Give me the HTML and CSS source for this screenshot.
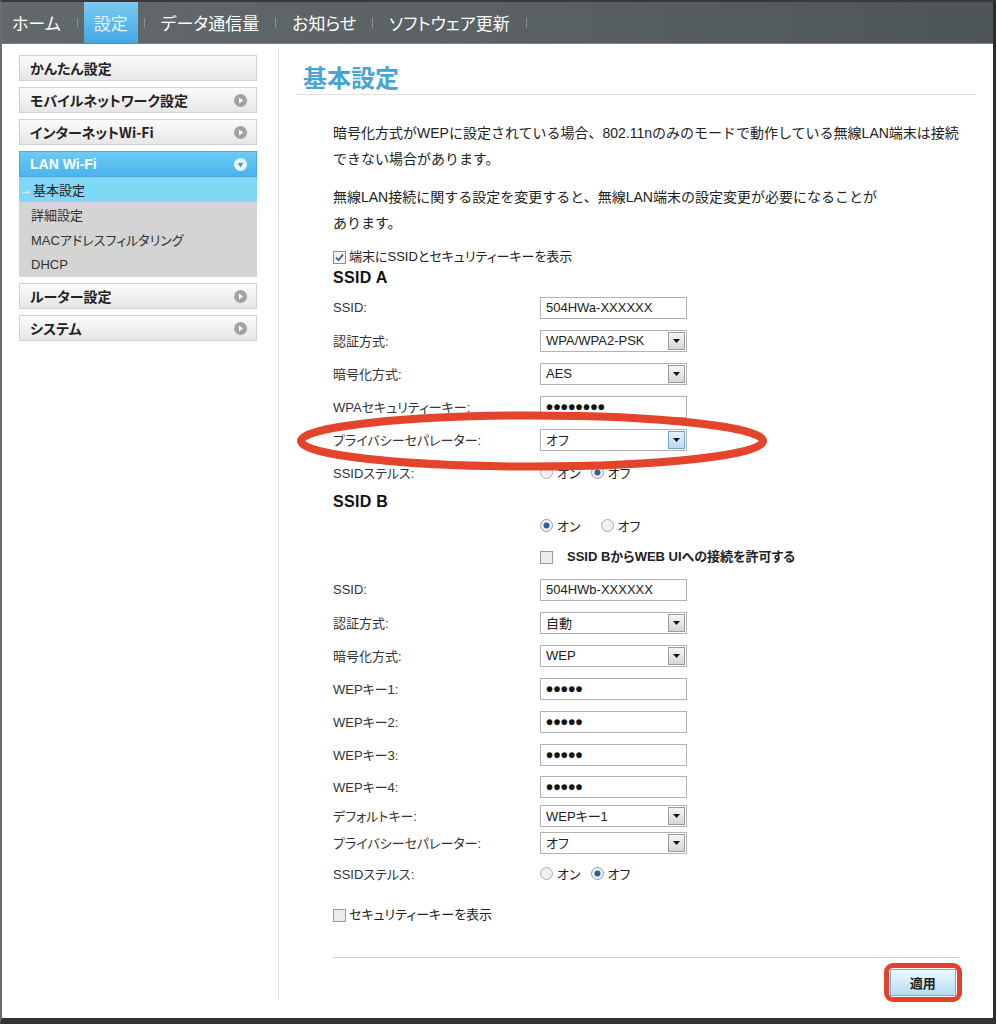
FILE: index.html
```html
<!DOCTYPE html>
<html lang="ja">
<head>
<meta charset="utf-8">
<title>基本設定</title>
<link rel="stylesheet" href="styles.css">
</head>
<body>
<div class="frame">
  <nav class="topnav">
    <a class="nav-item">ホーム</a><span class="nav-sep"></span>
    <a class="nav-item active">設定</a><span class="nav-sep"></span>
    <a class="nav-item">データ通信量</a><span class="nav-sep"></span>
    <a class="nav-item">お知らせ</a><span class="nav-sep"></span>
    <a class="nav-item">ソフトウェア更新</a><span class="nav-sep"></span>
  </nav>
  <div class="content">
    <aside class="sidebar">
      <div class="menu-btn"><span>かんたん設定</span></div>
      <div class="menu-btn"><span>モバイルネットワーク設定</span><svg class="menu-icon" viewBox="0 0 13 13"><circle cx="6.5" cy="6.5" r="6.5" fill="#a2a2a2"/><path d="M5 3.6 L9.2 6.5 L5 9.4Z" fill="#fff"/></svg></div>
      <div class="menu-btn"><span>インターネットWi-Fi</span><svg class="menu-icon" viewBox="0 0 13 13"><circle cx="6.5" cy="6.5" r="6.5" fill="#a2a2a2"/><path d="M5 3.6 L9.2 6.5 L5 9.4Z" fill="#fff"/></svg></div>
      <div class="menu-group">
        <div class="menu-btn open"><span>LAN Wi-Fi</span><svg class="menu-icon" viewBox="0 0 13 13"><circle cx="6.5" cy="6.5" r="6.5" fill="#e9f7fe"/><path d="M3.6 5 L9.4 5 L6.5 9.2Z" fill="#3f96d8"/></svg></div>
        <div class="submenu">
          <div class="sub-item current"><span class="sub-arrow">→</span>基本設定</div>
          <div class="sub-item">詳細設定</div>
          <div class="sub-item">MACアドレスフィルタリング</div>
          <div class="sub-item">DHCP</div>
        </div>
      </div>
      <div class="menu-btn"><span>ルーター設定</span><svg class="menu-icon" viewBox="0 0 13 13"><circle cx="6.5" cy="6.5" r="6.5" fill="#a2a2a2"/><path d="M5 3.6 L9.2 6.5 L5 9.4Z" fill="#fff"/></svg></div>
      <div class="menu-btn"><span>システム</span><svg class="menu-icon" viewBox="0 0 13 13"><circle cx="6.5" cy="6.5" r="6.5" fill="#a2a2a2"/><path d="M5 3.6 L9.2 6.5 L5 9.4Z" fill="#fff"/></svg></div>
    </aside>
    <main class="main">
      <h1 class="page-title">基本設定</h1>
      <div class="panel">
        <p class="note first">暗号化方式がWEPに設定されている場合、802.11nのみのモードで動作している無線LAN端末は接続<br>できない場合があります。</p>
        <p class="note">無線LAN接続に関する設定を変更すると、無線LAN端末の設定変更が必要になることが<br>あります。</p>

        <div class="check-line top-check">
          <svg class="box" viewBox="0 0 13 13"><rect x="0.5" y="0.5" width="12" height="12" fill="#f4f4f4" stroke="#8e8e8e"/><path d="M3 6.5 L5.5 9.2 L10 3.5" fill="none" stroke="#3a5f8c" stroke-width="1.8"/></svg>
          <span>端末にSSIDとセキュリティーキーを表示</span>
        </div>

        <h2 class="ssid-heading">SSID A</h2>
        <div class="row"><span class="label">SSID:</span><div class="field">504HWa-XXXXXX</div></div>
        <div class="row"><span class="label">認証方式:</span><div class="field select"><span>WPA/WPA2-PSK</span><span class="drop"><svg viewBox="0 0 7 4"><path d="M0 0H7L3.5 4Z" fill="#111"/></svg></span></div></div>
        <div class="row"><span class="label">暗号化方式:</span><div class="field select"><span>AES</span><span class="drop"><svg viewBox="0 0 7 4"><path d="M0 0H7L3.5 4Z" fill="#111"/></svg></span></div></div>
        <div class="row"><span class="label">WPAセキュリティーキー:</span><div class="field"><span class="dots">••••••••</span></div></div>
        <div class="row"><span class="label">プライバシーセパレーター:</span><div class="field select"><span>オフ</span><span class="drop focus"><svg viewBox="0 0 7 4"><path d="M0 0H7L3.5 4Z" fill="#111"/></svg></span></div></div>
        <div class="row"><span class="label">SSIDステルス:</span>
          <div class="radios">
            <span class="radio"><svg viewBox="0 0 13 13"><circle cx="6.5" cy="6.5" r="6" fill="#f1f1f1" stroke="#acacac"/></svg>オン</span>
            <span class="radio"><svg viewBox="0 0 13 13"><circle cx="6.5" cy="6.5" r="6" fill="#f1f1f1" stroke="#8a9bb0"/><circle cx="6.5" cy="6.5" r="3" fill="#2e5f99"/></svg>オフ</span>
          </div>
        </div>

        <h2 class="ssid-heading b">SSID B</h2>
        <div class="row radio-row"><span class="label"></span>
          <div class="radios">
            <span class="radio"><svg viewBox="0 0 13 13"><circle cx="6.5" cy="6.5" r="6" fill="#f1f1f1" stroke="#8a9bb0"/><circle cx="6.5" cy="6.5" r="3" fill="#2e5f99"/></svg>オン</span>
            <span class="radio wide"><svg viewBox="0 0 13 13"><circle cx="6.5" cy="6.5" r="6" fill="#f1f1f1" stroke="#acacac"/></svg>オフ</span>
          </div>
        </div>
        <div class="row check-row"><span class="label"></span>
          <div class="check-line">
            <svg class="box" viewBox="0 0 13 13"><rect x="0.5" y="0.5" width="12" height="12" fill="#ececec" stroke="#9a9a9a"/></svg>
            <span class="strong">SSID BからWEB UIへの接続を許可する</span>
          </div>
        </div>
        <div class="row"><span class="label">SSID:</span><div class="field">504HWb-XXXXXX</div></div>
        <div class="row"><span class="label">認証方式:</span><div class="field select"><span>自動</span><span class="drop"><svg viewBox="0 0 7 4"><path d="M0 0H7L3.5 4Z" fill="#111"/></svg></span></div></div>
        <div class="row"><span class="label">暗号化方式:</span><div class="field select"><span>WEP</span><span class="drop"><svg viewBox="0 0 7 4"><path d="M0 0H7L3.5 4Z" fill="#111"/></svg></span></div></div>
        <div class="row"><span class="label">WEPキー1:</span><div class="field"><span class="dots">•••••</span></div></div>
        <div class="row"><span class="label">WEPキー2:</span><div class="field"><span class="dots">•••••</span></div></div>
        <div class="row"><span class="label">WEPキー3:</span><div class="field"><span class="dots">•••••</span></div></div>
        <div class="row row-31"><span class="label">WEPキー4:</span><div class="field"><span class="dots">•••••</span></div></div>
        <div class="row row-27"><span class="label">デフォルトキー:</span><div class="field select"><span>WEPキー1</span><span class="drop"><svg viewBox="0 0 7 4"><path d="M0 0H7L3.5 4Z" fill="#111"/></svg></span></div></div>
        <div class="row row-27"><span class="label">プライバシーセパレーター:</span><div class="field select"><span>オフ</span><span class="drop"><svg viewBox="0 0 7 4"><path d="M0 0H7L3.5 4Z" fill="#111"/></svg></span></div></div>
        <div class="row row-35"><span class="label">SSIDステルス:</span>
          <div class="radios">
            <span class="radio"><svg viewBox="0 0 13 13"><circle cx="6.5" cy="6.5" r="6" fill="#f1f1f1" stroke="#acacac"/></svg>オン</span>
            <span class="radio"><svg viewBox="0 0 13 13"><circle cx="6.5" cy="6.5" r="6" fill="#f1f1f1" stroke="#8a9bb0"/><circle cx="6.5" cy="6.5" r="3" fill="#2e5f99"/></svg>オフ</span>
          </div>
        </div>

        <div class="check-line bottom-check">
          <svg class="box" viewBox="0 0 13 13"><rect x="0.5" y="0.5" width="12" height="12" fill="#ececec" stroke="#9a9a9a"/></svg>
          <span>セキュリティーキーを表示</span>
        </div>

        <div class="actions">
          <span class="callout"><button class="apply-btn" type="button">適用</button></span>
        </div>
      </div>
    </main>
  </div>
  <svg class="highlight-oval" viewBox="0 0 480 68"><ellipse cx="240" cy="34" rx="231" ry="25.5" fill="none" stroke="#e4432c" stroke-width="8"/></svg>
</div>
</body>
</html>
```

FILE: styles.css
```css
* { box-sizing: border-box; }

body {
  margin: 0;
  background: #fff;
  color: #222;
  font-family: "Liberation Sans", "Noto Sans CJK JP", sans-serif;
}

.frame {
  position: relative;
  width: 996px;
  height: 1024px;
  border-style: solid;
  border-width: 2px 3px 6px 2px;
  border-color: #3a3a3a #2c2c2c #333 #6c6c6c;
  display: flex;
  flex-direction: column;
}

/* top navigation */
.topnav {
  flex: none;
  height: 42px;
  display: flex;
  align-items: stretch;
  background: linear-gradient(90deg, #62696b 0%, #5a6264 50%, #4d5556 100%);
  border-bottom: 1px solid #7c8283;
}

.nav-item {
  display: flex;
  align-items: center;
  padding: 0 10px;
  color: #fff;
  font-size: 17px;
  font-family: "Noto Sans CJK JP", sans-serif;
  font-feature-settings: "palt";
  text-decoration: none;
}

.nav-item.active {
  background: linear-gradient(#79cbf3, #45a7e2);
  color: #e4f4fd;
}

.nav-sep {
  align-self: center;
  width: 1px;
  height: 10px;
  margin: 0 6px;
  background: #8d9394;
}

/* content */
.content {
  flex: 1;
  display: flex;
}

.sidebar {
  flex: none;
  width: 277px;
  margin: 4px 0 18px;
  padding: 7px 0 0 17px;
  border-right: 1px solid #dedede;
}

.menu-btn {
  width: 238px;
  height: 26px;
  margin-bottom: 6px;
  display: flex;
  align-items: center;
  justify-content: space-between;
  padding: 0 9px 0 10px;
  border: 1px solid #d0d0d0;
  background: linear-gradient(#fbfbfb, #e6e6e6);
  font-family: "Noto Sans CJK JP", sans-serif;
  font-feature-settings: "palt";
  font-weight: bold;
  font-size: 14px;
  color: #222;
}

.menu-btn.open {
  margin-bottom: 0;
  border-color: #49a9e0;
  background: linear-gradient(#6ccbf5, #4bb4ec);
  color: #fff;
  font-family: "Liberation Sans", "Noto Sans CJK JP", sans-serif;
}

.menu-icon {
  width: 13px;
  height: 13px;
  flex: none;
}

.menu-group {
  margin-bottom: 6px;
}

.submenu {
  width: 238px;
  background: #d4d4d4;
}

.sub-item {
  height: 25px;
  display: flex;
  align-items: center;
  padding-left: 12px;
  font-size: 13px;
  font-feature-settings: "palt";
  color: #333;
}

.sub-item.current {
  padding-left: 1px;
  background: #80d7f6;
  color: #222;
}

.sub-arrow {
  color: #fff;
  font-size: 12px;
  margin-right: 1px;
}

/* main */
.main {
  flex: 1;
  padding: 18px 21px 0 17px;
}

.page-title {
  margin: 0;
  padding: 0 0 2px 7px;
  font-size: 24px;
  line-height: 30px;
  font-weight: bold;
  color: #48a4d3;
  font-family: "Noto Sans CJK JP", sans-serif;
  border-bottom: 1px solid #e2e2e2;
}

.panel {
  padding: 0 17px 0 37px;
}

.note {
  margin: 12px 0 0;
  font-size: 14px;
  line-height: 26px;
  color: #222;
  white-space: nowrap;
}

.note.first {
  margin-top: 25px;
}

.check-line {
  display: flex;
  align-items: center;
  gap: 3px;
  font-size: 13px;
  font-feature-settings: "palt";
  color: #222;
  line-height: 20px;
}

.check-line .box {
  width: 13px;
  height: 13px;
  flex: none;
}

.top-check {
  margin-top: 11px;
}

.ssid-heading {
  margin: 0;
  font-size: 16px;
  line-height: 22px;
  font-weight: bold;
  color: #111;
  letter-spacing: 0.3px;
}

.ssid-heading.b {
  margin-top: 1px;
  line-height: 24px;
}

.row {
  height: 33px;
  display: flex;
  align-items: center;
  font-feature-settings: "palt";
}

.ssid-heading + .row {
  margin-top: 2px;
}

.row-31 { height: 31px; }
.row-27 { height: 27px; }
.row-35 { height: 35px; }

.ssid-heading + .radio-row {
  height: 22px;
  margin-top: 0;
}

.check-row {
  height: 32px;
  margin-top: 5px;
}

.check-row .check-line {
  gap: 14px;
}

.strong {
  font-weight: bold;
}

.label {
  width: 207px;
  flex: none;
  font-size: 13px;
  color: #333;
}

.field {
  width: 147px;
  height: 22px;
  display: flex;
  align-items: center;
  justify-content: space-between;
  padding: 0 1px 0 5px;
  border: 1px solid #b2b2b2;
  background: #fff;
  font-size: 13px;
  color: #222;
}

.drop {
  width: 17px;
  height: 18px;
  display: flex;
  align-items: center;
  justify-content: center;
  border: 1px solid #9b9b9b;
  background: linear-gradient(#f6f6f6, #d6d6d6);
}

.drop.focus {
  border-color: #6ea4d0;
  background: linear-gradient(#e6f2fb, #bcd9ef);
}

.drop svg {
  width: 7px;
  height: 4px;
}

.dots {
  font-size: 20px;
  font-weight: bold;
  line-height: 20px;
  color: #111;
  letter-spacing: 0.4px;
}

.radios {
  display: flex;
  align-items: center;
  gap: 10px;
  font-size: 13px;
  color: #222;
}

.radio {
  display: flex;
  align-items: center;
  gap: 4px;
}

.radio svg {
  width: 13px;
  height: 13px;
}

.radio.wide {
  margin-left: 10px;
}

.bottom-check {
  margin-top: 14px;
}

.actions {
  margin-top: 32px;
  padding-top: 5px;
  border-top: 1px solid #cdcdcd;
  display: flex;
  justify-content: flex-end;
}

.callout {
  display: inline-flex;
  margin-right: -3px;
  padding: 1px;
  border: 5px solid #e2412b;
  border-radius: 9px;
}

.apply-btn {
  width: 66px;
  height: 27px;
  padding: 0;
  border: 1px solid #79acd0;
  background: linear-gradient(#f0f9fe, #b3ddf4);
  font-family: "Noto Sans CJK JP", sans-serif;
  font-weight: bold;
  font-size: 13px;
  color: #222;
}

/* annotation overlay */
.highlight-oval {
  position: absolute;
  left: 290px;
  top: 405px;
  width: 480px;
  height: 68px;
  pointer-events: none;
}
```
